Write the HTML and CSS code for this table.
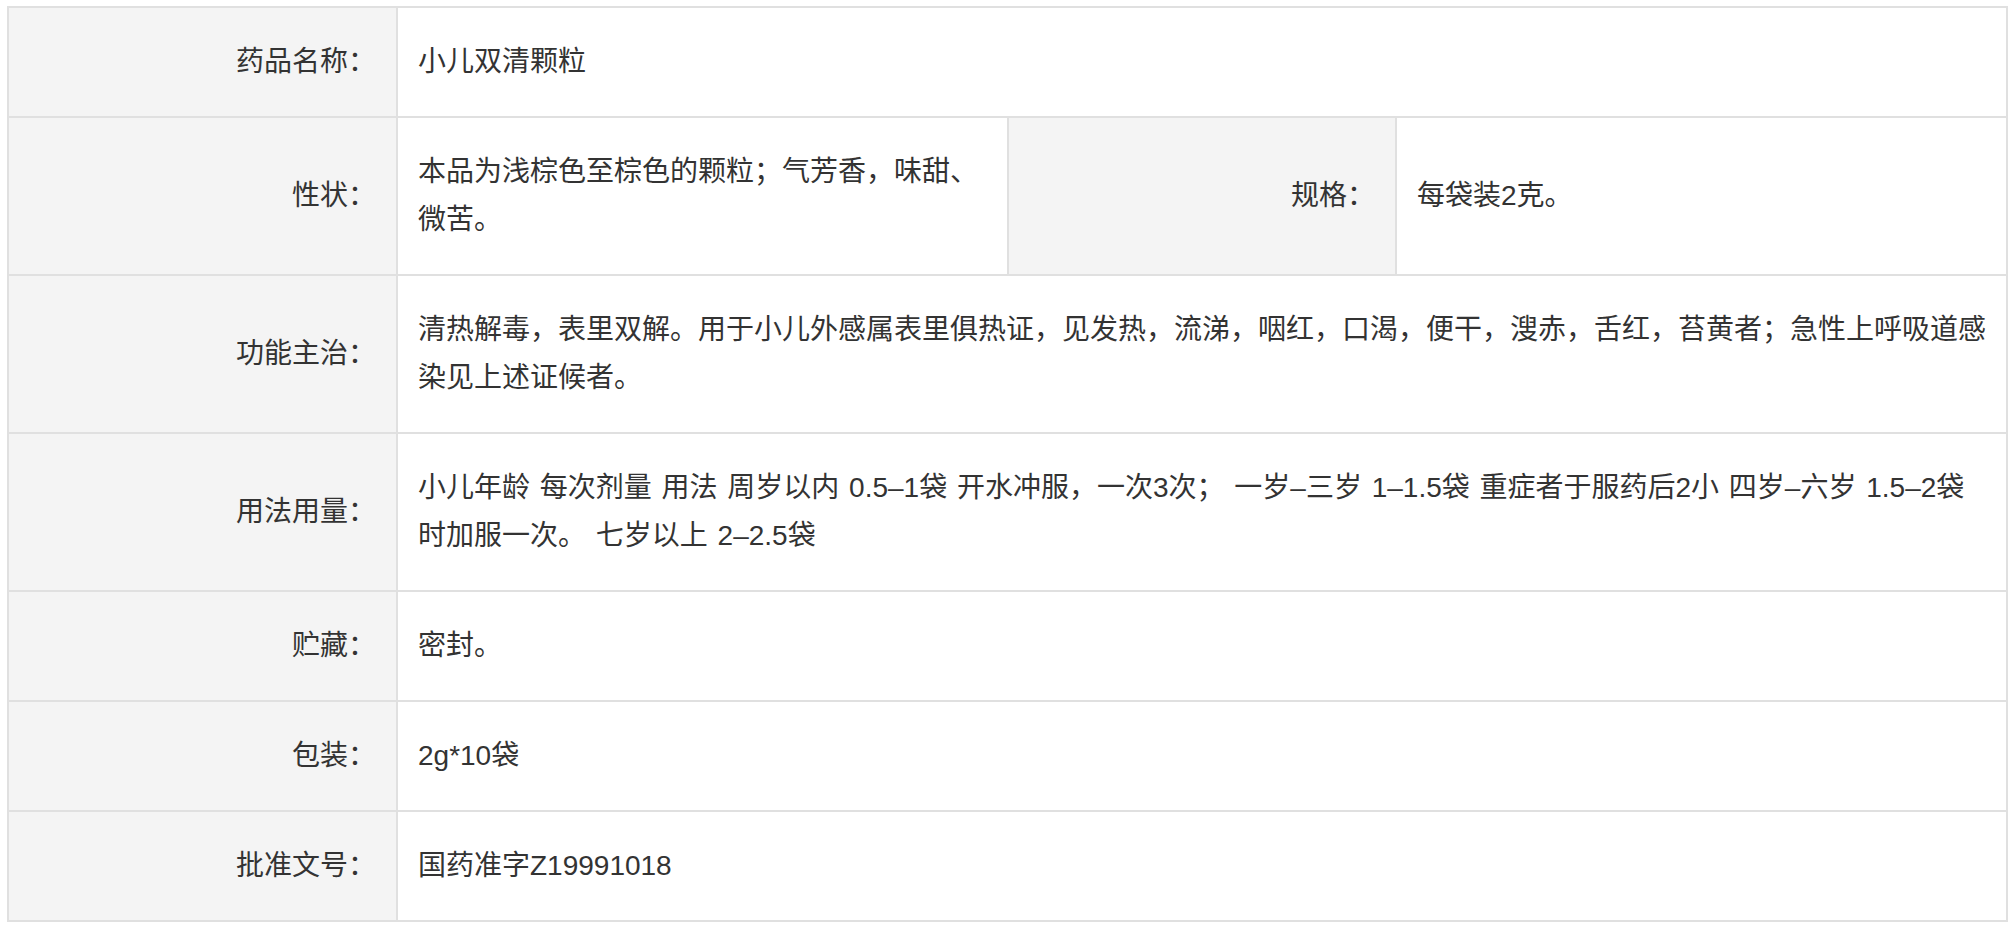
FILE: index.html
```html
<!DOCTYPE html>
<html lang="zh-CN">
<head>
<meta charset="utf-8">
<title>药品说明</title>
<link rel="stylesheet" href="styles.css">
</head>
<body>
<div class="spec">
  <div class="label">药品名称：</div>
  <div class="value wide">小儿双清颗粒</div>

  <div class="label">性状：</div>
  <div class="value">本品为浅棕色至棕色的颗粒；气芳香，味甜、微苦。</div>
  <div class="label">规格：</div>
  <div class="value">每袋装2克。</div>

  <div class="label">功能主治：</div>
  <div class="value wide">清热解毒，表里双解。用于小儿外感属表里俱热证，见发热，流涕，咽红，口渴，便干，溲赤，舌红，苔黄者；急性上呼吸道感染见上述证候者。</div>

  <div class="label">用法用量：</div>
  <div class="value wide">小儿年龄 每次剂量 用法 周岁以内 0.5–1袋 开水冲服，一次3次； 一岁–三岁 1–1.5袋 重症者于服药后2小 四岁–六岁 1.5–2袋 时加服一次。 七岁以上 2–2.5袋</div>

  <div class="label">贮藏：</div>
  <div class="value wide">密封。</div>

  <div class="label">包装：</div>
  <div class="value wide">2g*10袋</div>

  <div class="label">批准文号：</div>
  <div class="value wide">国药准字Z19991018</div>
</div>
</body>
</html>
```

FILE: styles.css
```css
html, body {
  margin: 0;
  padding: 0;
  background: #ffffff;
}

body {
  padding: 6px 0 0 7px;
  font-family: "Liberation Sans", "Noto Sans CJK SC", sans-serif;
  font-size: 28px;
  line-height: 48px;
  color: #333333;
  word-spacing: 2px;
}

.spec {
  display: grid;
  grid-template-columns: 389px 611px 388px 611px;
  width: 1999px;
  border-top: 2px solid #e0e0e0;
  border-left: 2px solid #e0e0e0;
}

.label,
.value {
  padding: 30px 20px;
  border-right: 2px solid #e0e0e0;
  border-bottom: 2px solid #e0e0e0;
  display: flex;
  align-items: center;
}

.label {
  background: #f4f4f4;
  justify-content: flex-end;
}

.value {
  background: #ffffff;
}

.wide {
  grid-column: span 3;
}
```
